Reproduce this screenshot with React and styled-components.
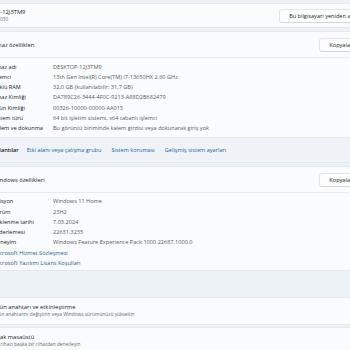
import React from 'react';
import styled, { createGlobalStyle } from 'styled-components';

const Global = createGlobalStyle`
  html, body { margin: 0; padding: 0; background: #edf2f7; overflow: hidden; }
  body { width: 350px; height: 350px; font-family: "Open Sans", "Noto Sans", sans-serif; }
  * { box-sizing: border-box; }
`;

const Page = styled.div`
  margin: 0 -38px 0 -48px;
  padding-top: 3px;
  display: flex;
  flex-direction: column;
  color: #1c1c1c;
  font-size: 5.6px;
`;

const Card = styled.section`
  background: #f9fbfd;
  border: 1px solid #e3e8ed;
  border-radius: 4px;
  margin-top: ${p => p.$mt || 0}px;
  overflow: hidden;
`;

const TopCard = styled(Card)`
  height: 25px;
  display: flex;
  align-items: center;
  justify-content: space-between;
  padding: 0 8px 0 22px;
`;

const NameBlock = styled.div`
  display: flex;
  flex-direction: column;
`;

const Name = styled.div`
  line-height: 7px;
  font-size: 5.8px;
`;

const Model = styled.div`
  line-height: 7px;
  font-size: 4.6px;
  color: #707070;
`;

const Button = styled.button`
  height: 14px;
  padding: 0 9px;
  background: #fdfdfe;
  border: 1px solid #e2e5e9;
  border-bottom-color: #d2d5d9;
  border-radius: 3px;
  font-family: inherit;
  font-size: 5.6px;
  color: #1c1c1c;
  white-space: nowrap;
`;

const Header = styled.div`
  height: 26px;
  display: flex;
  align-items: center;
  padding: 0 9px 0 16px;
  border-bottom: 1px solid #e6e9ed;
`;

const IconSlot = styled.span`
  width: 14px;
  height: 14px;
  margin-right: 10px;
  display: flex;
  align-items: center;
  justify-content: center;
  color: #333;
`;

const HeaderTitle = styled.div`
  flex: 1;
  font-size: 5.8px;
`;

const Chevron = styled.span`
  width: 8px;
  margin-left: 10px;
  display: flex;
  color: #444;
`;

const Body = styled.div`
  padding: ${p => p.$pt}px 0 ${p => p.$pb}px 40px;
`;

const Row = styled.div`
  display: grid;
  grid-template-columns: 60px 1fr;
  line-height: 10.25px;
  white-space: nowrap;
`;

const Label = styled.span`
  color: #1c1c1c;
`;

const Value = styled.span`
  color: #5b5b5b;
`;

const TextLink = styled.a`
  display: block;
  line-height: 10.25px;
  color: #1d5ea8;
  text-decoration: none;
  white-space: nowrap;
`;

const Related = styled.div`
  height: 25px;
  display: flex;
  align-items: center;
  gap: 10px;
  padding-left: 24px;
  background: #eff3f7;
  border-top: 1px solid #e6e9ed;
  white-space: nowrap;
`;

const RelatedTitle = styled.span`
  font-weight: 600;
  margin-right: -2px;
`;

const RelatedLink = styled.a`
  color: #1d5ea8;
  text-decoration: none;
`;

const SectionHeading = styled.div`
  height: 26px;
  display: flex;
  align-items: center;
  padding-left: 2px;
  font-weight: 600;
  font-size: 5.8px;
`;

const ActionCard = styled(Card)`
  height: 28px;
  display: flex;
  align-items: center;
  padding: 0 14px 0 16px;
`;

const ActionText = styled.div`
  flex: 1;
  display: flex;
  flex-direction: column;
`;

const ActionTitle = styled.div`
  line-height: 7px;
  font-size: 5.8px;
`;

const ActionSub = styled.div`
  line-height: 7px;
  font-size: 4.8px;
  color: #6b6b6b;
`;

const Info = () => (
  <svg width="12" height="12" viewBox="0 0 16 16" fill="none" stroke="currentColor" strokeWidth="1.2">
    <circle cx="8" cy="8" r="6.5" />
    <path d="M8 7v4.5M8 4.6v.6" />
  </svg>
);

const Win = () => (
  <svg width="12" height="12" viewBox="0 0 16 16" fill="#0a64c2">
    <rect x="1" y="1" width="6.5" height="6.5" />
    <rect x="8.5" y="1" width="6.5" height="6.5" />
    <rect x="1" y="8.5" width="6.5" height="6.5" />
    <rect x="8.5" y="8.5" width="6.5" height="6.5" />
  </svg>
);

const Key = () => (
  <svg width="12" height="12" viewBox="0 0 16 16" fill="none" stroke="currentColor" strokeWidth="1.2">
    <circle cx="5" cy="11" r="3" />
    <path d="M7 9l7-7M11 5l2 2" />
  </svg>
);

const Remote = () => (
  <svg width="12" height="12" viewBox="0 0 16 16" fill="none" stroke="currentColor" strokeWidth="1.2">
    <rect x="1.5" y="2.5" width="13" height="9" rx="1" />
    <path d="M5 14h6M8 11.5V14" />
  </svg>
);

const ChevronIcon = ({ dir = 'up' }) => (
  <svg width="8" height="8" viewBox="0 0 8 8" fill="none" stroke="currentColor" strokeWidth="0.9">
    {dir === 'up' ? <path d="M1.5 5.5L4 3l2.5 2.5" /> : <path d="M3 1.5L5.5 4 3 6.5" />}
  </svg>
);

const deviceSpecs = [
  ['Cihaz adı', 'DESKTOP-12J3TM9'],
  ['İşlemci', '13th Gen Intel(R) Core(TM) i7-13650HX   2.60 GHz'],
  ['Yüklü RAM', '32,0 GB (kullanılabilir: 31,7 GB)'],
  ['Cihaz Kimliği', 'DA789C26-3444-4F0C-9213-A88D2B682479'],
  ['Ürün Kimliği', '00326-10000-00000-AA013'],
  ['Sistem türü', '64 bit işletim sistemi, x64 tabanlı işlemci'],
  ['Kalem ve dokunma', 'Bu görüntü biriminde kalem girdisi veya dokunarak giriş yok'],
];

const winSpecs = [
  ['Edisyon', 'Windows 11 Home'],
  ['Sürüm', '23H2'],
  ['Yüklenme tarihi', '7.03.2024'],
  ['İS derlemesi', '22631.3235'],
  ['Deneyim', 'Windows Feature Experience Pack 1000.22687.1000.0'],
];

export default function App() {
  return (
    <>
      <Global />
      <Page>
        <TopCard>
          <NameBlock>
            <Name>DESKTOP-12J3TM9</Name>
            <Model>Victus 16-r0030</Model>
          </NameBlock>
          <Button>Bu bilgisayarı yeniden adlandır</Button>
        </TopCard>

        <Card $mt={3}>
          <Header>
            <IconSlot><Info /></IconSlot>
            <HeaderTitle>Cihaz özellikleri</HeaderTitle>
            <Button>Kopyala</Button>
            <Chevron><ChevronIcon /></Chevron>
          </Header>
          <Body $pt={3.5} $pb={4}>
            {deviceSpecs.map(([k, v]) => (
              <Row key={k}><Label>{k}</Label><Value>{v}</Value></Row>
            ))}
          </Body>
          <Related>
            <RelatedTitle>İlgili bağlantılar</RelatedTitle>
            <RelatedLink>Etki alanı veya çalışma grubu</RelatedLink>
            <RelatedLink>Sistem koruması</RelatedLink>
            <RelatedLink>Gelişmiş sistem ayarları</RelatedLink>
          </Related>
        </Card>

        <Card $mt={3}>
          <Header>
            <IconSlot><Win /></IconSlot>
            <HeaderTitle>Windows özellikleri</HeaderTitle>
            <Button>Kopyala</Button>
            <Chevron><ChevronIcon /></Chevron>
          </Header>
          <Body $pt={3} $pb={1.5}>
            {winSpecs.map(([k, v]) => (
              <Row key={k}><Label>{k}</Label><Value>{v}</Value></Row>
            ))}
            <TextLink>Microsoft Hizmet Sözleşmesi</TextLink>
            <TextLink>Microsoft Yazılımı Lisans Koşulları</TextLink>
          </Body>
        </Card>

        <SectionHeading>İlgili</SectionHeading>

        <ActionCard>
          <IconSlot><Key /></IconSlot>
          <ActionText>
            <ActionTitle>Ürün anahtarı ve etkinleştirme</ActionTitle>
            <ActionSub>Ürün anahtarını değiştirin veya Windows sürümünüzü yükseltin</ActionSub>
          </ActionText>
          <Chevron><ChevronIcon dir="right" /></Chevron>
        </ActionCard>

        <ActionCard $mt={2}>
          <IconSlot><Remote /></IconSlot>
          <ActionText>
            <ActionTitle>Uzak masaüstü</ActionTitle>
            <ActionSub>Bu cihazı başka bir cihazdan denetleyin</ActionSub>
          </ActionText>
          <Chevron><ChevronIcon dir="right" /></Chevron>
        </ActionCard>
      </Page>
    </>
  );
}
